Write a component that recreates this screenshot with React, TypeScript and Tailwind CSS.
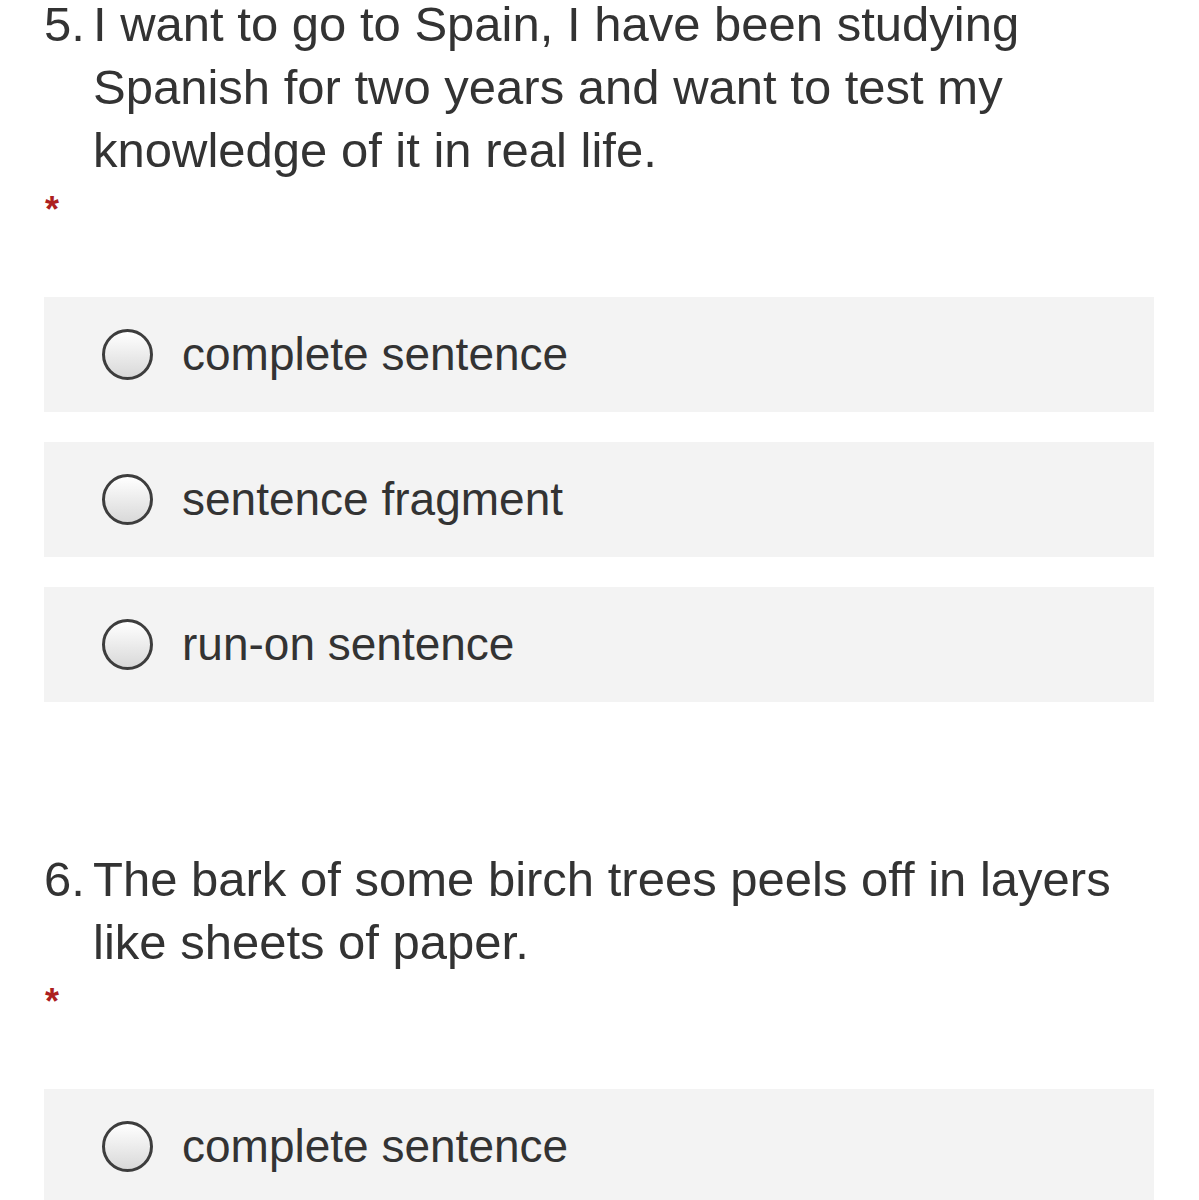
import React from 'react';

type Question = {
  num: number;
  text: string;
  options: string[];
};

const questions: Question[] = [
  {
    num: 5,
    text: 'I want to go to Spain, I have been studying Spanish for two years and want to test my knowledge of it in real life.',
    options: ['complete sentence', 'sentence fragment', 'run-on sentence'],
  },
  {
    num: 6,
    text: 'The bark of some birch trees peels off in layers like sheets of paper.',
    options: ['complete sentence', 'sentence fragment', 'run-on sentence'],
  },
];

const Radio = () => (
  <span className="block w-[51px] h-[51px] shrink-0 rounded-full border-[3px] border-[#3d3d3d] bg-gradient-to-b from-[#ffffff] to-[#d9d9d9]"></span>
);

const QuestionBlock = ({ q }: { q: Question }) => (
  <div>
    <div className="flex text-[49px] leading-[63px] text-[#333333]">
      <span className="w-[49px] shrink-0">{q.num}.</span>
      <span>{q.text}</span>
    </div>
    {/* required marker */}
    <div className="mt-[5px] text-[36px] font-bold leading-[46px] text-[#ad1f1f] pl-[1px]">*</div>
    <div className="mt-[64px] flex flex-col gap-[30px]">
      {q.options.map((opt) => (
        <label key={opt} className="flex items-center h-[115px] bg-[#f3f3f3] pl-[58px] gap-[29px]">
          <Radio />
          <span className="text-[46px] text-[#333333]">{opt}</span>
        </label>
      ))}
    </div>
  </div>
);

export default function App() {
  return (
    <div
      className="w-[1199px] h-[1200px] overflow-hidden bg-white pl-[44px] pr-[45px]"
      style={{ fontFamily: '"Liberation Sans", Arial, sans-serif' }}
    >
      <div className="-mt-[7px] flex flex-col gap-[146px]">
        {questions.map((q) => (
          <QuestionBlock key={q.num} q={q} />
        ))}
      </div>
    </div>
  );
}
